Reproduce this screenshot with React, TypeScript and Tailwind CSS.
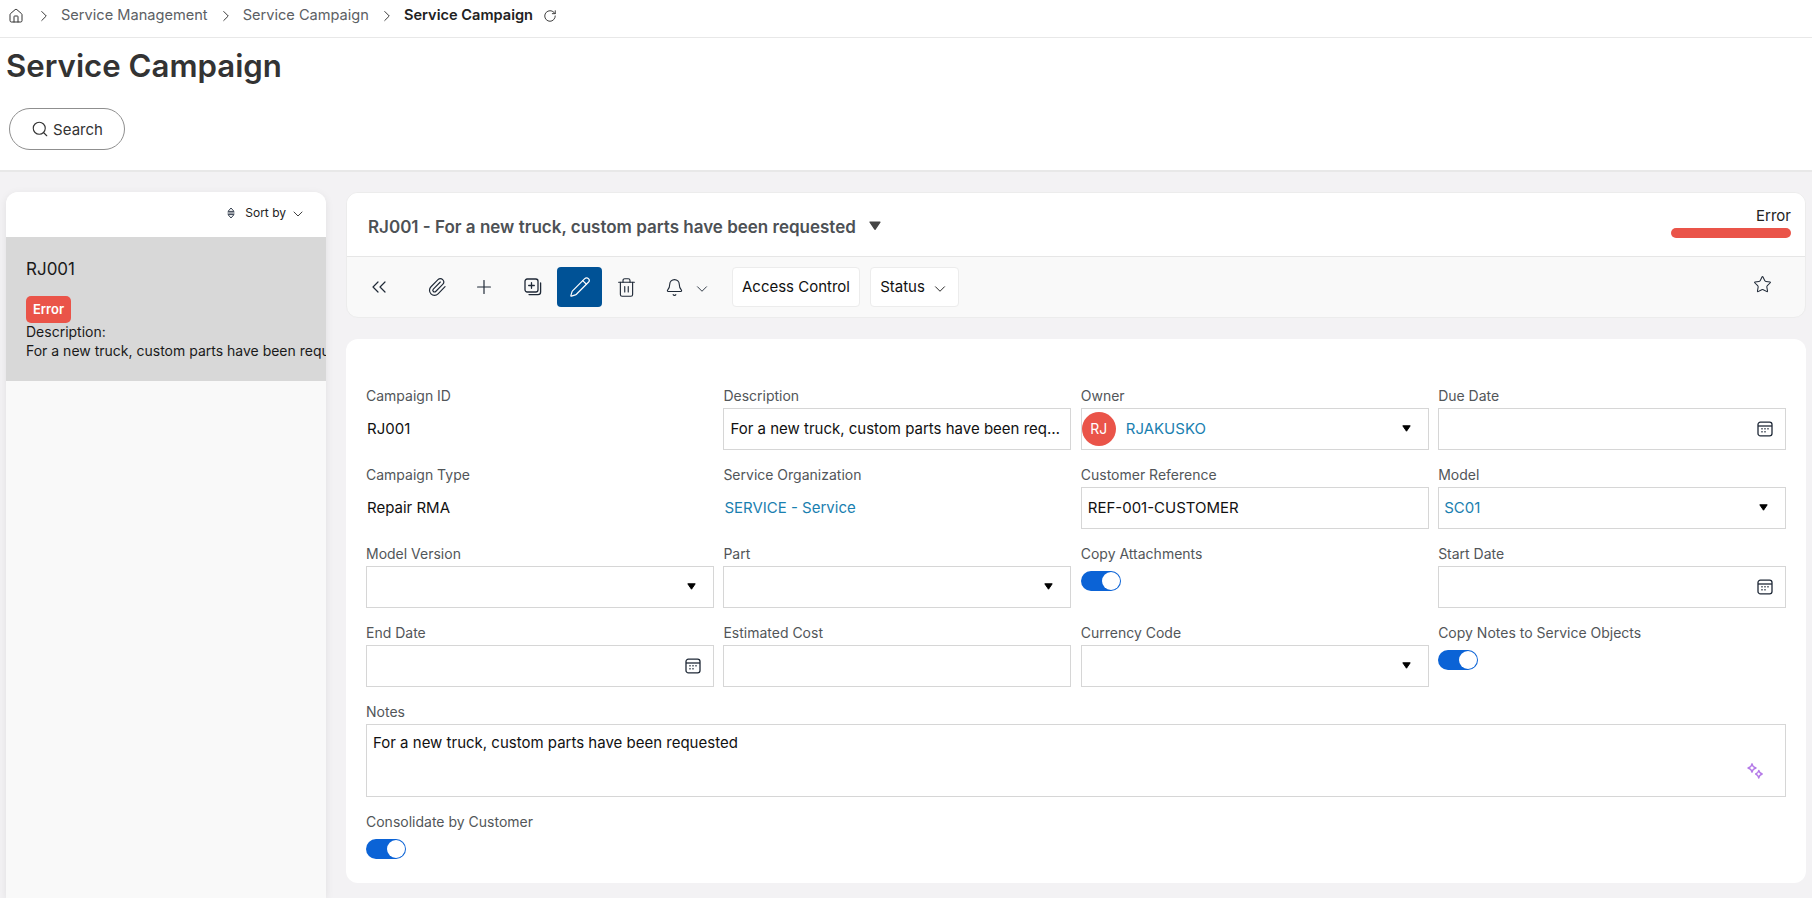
import React from 'react';
import { Bell, ChevronDown, ChevronRight, ChevronsLeft, House, Paperclip, Pencil, Plus, RotateCw, Search, Star, Trash2 } from 'lucide-react';

const Caret = ({ className = '', size = 9 }: { className?: string; size?: number }) => (
  <svg width={size} height={size * 0.78} viewBox="0 0 9 7" className={className}>
    <path d="M0.8 0.8 H8.2 L4.5 6.2 Z" fill="currentColor" stroke="currentColor" strokeLinejoin="round" />
  </svg>
);

const CalendarIcon = () => (
  <svg width="16" height="16" viewBox="0 0 16 16" fill="none" stroke="#1f2937" strokeWidth="1.3">
    <rect x="1" y="1.2" width="14" height="13.6" rx="2.4" />
    <path d="M1 5 H15" />
    <path d="M4.4 7.8h1.2M7.4 7.8h1.2M10.4 7.8h1.2M4.4 10.8h1.2M7.4 10.8h1.2" strokeWidth="1.4" />
  </svg>
);

const SparkleIcon = () => (
  <svg width="16" height="16" viewBox="0 0 16 16" fill="none" stroke="#b57be8" strokeWidth="1.4" strokeLinejoin="round">
    <path d="M5 0.8 Q5.6 4.2 9 5 Q5.6 5.8 5 9.2 Q4.4 5.8 1 5 Q4.4 4.2 5 0.8 Z" />
    <path d="M11.8 7.4 Q12.2 10 15.2 11 Q12.2 12 11.8 15 Q11.2 12 8.6 11 Q11.2 10 11.8 7.4 Z" />
  </svg>
);

const SortIcon = () => (
  <svg width="8" height="12" viewBox="0 0 8 12" fill="none" stroke="#374151" strokeWidth="1">
    <path d="M1 4.4 L4 1 L7 4.4 Z" />
    <path d="M0.5 6 H7.5" />
    <path d="M1 7.6 L4 11 L7 7.6 Z" />
  </svg>
);

const DuplicateIcon = () => (
  <svg width="18" height="18" viewBox="0 0 18 18" fill="none" stroke="#1f2937" strokeWidth="1.3" strokeLinecap="round">
    <rect x="1" y="1" width="13" height="13" rx="2.2" />
    <path d="M7.5 4.7 V10.3 M4.7 7.5 H10.3" />
    <path d="M16.6 5 V14 Q16.6 16.6 14 16.6 H5" />
  </svg>
);

const Toggle = () => (
  <div className="mt-[5px] flex h-5 w-10 items-center justify-end rounded-full bg-[#0b63d6] p-px">
    <div className="size-[18px] rounded-full bg-white" />
  </div>
);

const Field = ({ label, children }: { label: string; children: React.ReactNode }) => (
  <div className="min-w-0">
    <div className="h-[23px] text-sm leading-[21px] text-[#525659]">{label}</div>
    {children}
  </div>
);

const Box = ({ children, className = '' }: { children?: React.ReactNode; className?: string }) => (
  <div className={`flex h-[42px] items-center border border-[#d6d6d6] bg-white text-[15px] text-[#111] ${className}`}>
    {children}
  </div>
);

const SelectBox = ({ children }: { children?: React.ReactNode }) => (
  <Box className="pr-[17px]">
    <div className="min-w-0 flex-1">{children}</div>
    <Caret className="text-black" />
  </Box>
);

const DateBox = () => (
  <Box className="justify-end pr-[12px]">
    <CalendarIcon />
  </Box>
);

const Plain = ({ children, link }: { children: React.ReactNode; link?: boolean }) => (
  <div className={`flex h-[42px] items-center pl-px text-[15px] ${link ? 'text-[#1a80b0]' : 'text-[#111]'}`}>{children}</div>
);

export default function App() {
  return (
    <div className="flex h-[898px] flex-col overflow-hidden bg-[#f3f2f4] font-['Inter',sans-serif]">
      <header className="border-b-2 border-[#e8e8e8] bg-white">
        <nav className="flex h-[38px] items-center border-b border-[#e8e8e8] pb-[6px] pl-[8px] text-[14.6px] text-[#5c6064]">
          <House size={16} strokeWidth={1.5} className="text-[#333]" />
          <ChevronRight size={18} strokeWidth={1.3} className="ml-[11px] text-[#333]" />
          <span className="ml-[8px]">Service Management</span>
          <ChevronRight size={18} strokeWidth={1.3} className="ml-[9px] text-[#333]" />
          <span className="ml-[8px]">Service Campaign</span>
          <ChevronRight size={18} strokeWidth={1.3} className="ml-[9px] text-[#333]" />
          <span className="ml-[8px] font-semibold text-[#222]">Service Campaign</span>
          <RotateCw size={14} strokeWidth={1.6} className="ml-[10px] text-[#333]" />
        </nav>
        <h1 className="mt-[7px] pl-[6px] text-[31.2px] leading-[42px] font-semibold text-[#333]">Service Campaign</h1>
        <div className="mt-[21px] mb-[20px] pl-[9px]">
          <button className="flex h-[42px] w-[116px] items-center justify-center gap-[4px] rounded-[21px] border border-[#8f8f8f] bg-white pt-[2px] text-[15px] text-[#333]">
            <Search size={18} strokeWidth={1.5} className="-mt-[2px]" />
            Search
          </button>
        </div>
      </header>

      <div className="flex min-h-0 flex-1 gap-[20px] pt-5 pr-[6px] pl-[6px]">
        <aside className="flex w-[320px] shrink-0 flex-col overflow-hidden rounded-t-xl bg-[#f9f9f9] shadow-[0_2px_8px_rgba(0,0,0,0.08)]">
          <div className="flex h-[45px] shrink-0 items-center justify-end bg-white pr-[20px] pb-[3px] text-xs text-[#222]">
            <SortIcon />
            <span className="ml-[10px]">Sort by</span>
            <ChevronDown size={16} strokeWidth={1.3} className="mt-[2px] ml-[4px]" />
          </div>
          <div className="h-[144px] shrink-0 overflow-hidden bg-[#d8d8d8] pt-[19px] pl-5 text-sm whitespace-nowrap text-[#1a1a1a]">
            <div className="text-[17px] leading-[26px]">RJ001</div>
            <div className="mt-[14px] flex h-[27px] w-[45px] items-center justify-center rounded-[5px] bg-[#ea5449] text-[13px] font-semibold text-white">Error</div>
            <div className="-mt-px leading-[19px]">Description:</div>
            <div className="leading-[19px]">For a new truck, custom parts have been requested</div>
          </div>
        </aside>

        <main className="flex min-w-0 flex-1 flex-col gap-[21px]">
          <section className="shrink-0 overflow-hidden rounded-xl border border-[#ececec] bg-[#f9f9f9]">
            <div className="flex h-[64px] items-center justify-between border-b border-[#e6e6e6] bg-white pr-[14px] pl-[21px]">
              <div className="flex items-center gap-[13px] pt-[6px] text-[17px] font-semibold text-[#4d5155]">
                RJ001 - For a new truck, custom parts have been requested
                <Caret size={12} className="mb-[4px] text-[#444]" />
              </div>
              <div className="flex w-[120px] flex-col items-end pb-[7px]">
                <span className="text-[15px] leading-[22px] text-[#222]">Error</span>
                <div className="mt-[1px] h-[10px] w-full rounded-full bg-[#ea5449]" />
              </div>
            </div>
            <div className="flex h-[60px] items-center pr-[33px] pl-[20px] text-[#1f2937]">
              <ChevronsLeft size={24} strokeWidth={1.2} />
              <Paperclip size={20} strokeWidth={1.4} className="ml-[36px]" />
              <Plus size={22} strokeWidth={1.3} className="ml-[26px]" />
              <div className="ml-[29px]"><DuplicateIcon /></div>
              <button className="ml-[15px] flex h-10 w-[45px] items-center justify-center rounded-[4px] bg-[#005296] text-white">
                <Pencil size={22} strokeWidth={1.3} />
              </button>
              <Trash2 size={21} strokeWidth={1.3} className="ml-[14px]" />
              <Bell size={19} strokeWidth={1.4} className="ml-[28px]" />
              <ChevronDown size={18} strokeWidth={1.2} className="mt-[3px] ml-[9px]" />
              <div className="ml-[21px] flex h-10 w-[128px] items-center justify-center rounded-[4px] border border-[#ececec] bg-white text-[15px] text-[#111]">Access Control</div>
              <div className="ml-[10px] flex h-10 w-[89px] items-center justify-center gap-[6px] rounded-[4px] border border-[#ececec] bg-white text-[15px] text-[#111]">
                Status
                <ChevronDown size={18} strokeWidth={1.2} className="mt-[3px]" />
              </div>
              <Star size={19} strokeWidth={1.3} className="mb-[6px] ml-auto" />
            </div>
          </section>

          <section className="h-[544px] shrink-0 rounded-xl bg-white pt-[46px] pr-5 pl-[20px]">
            <div className="grid grid-cols-4 gap-x-[9.5px] gap-y-[14px]">
              <Field label="Campaign ID"><Plain>RJ001</Plain></Field>
              <Field label="Description">
                <Box className="px-[6px]"><span className="truncate">For a new truck, custom parts have been requested</span></Box>
              </Field>
              <Field label="Owner">
                <SelectBox>
                  <div className="flex items-center gap-[10px]">
                    <div className="flex size-[34px] items-center justify-center rounded-full bg-[#ea5449] text-sm text-white">RJ</div>
                    <span className="text-[#1a80b0]">RJAKUSKO</span>
                  </div>
                </SelectBox>
              </Field>
              <Field label="Due Date"><DateBox /></Field>

              <Field label="Campaign Type"><Plain>Repair RMA</Plain></Field>
              <Field label="Service Organization"><Plain link>SERVICE - Service</Plain></Field>
              <Field label="Customer Reference"><Box className="px-[6px]">REF-001-CUSTOMER</Box></Field>
              <Field label="Model">
                <SelectBox><span className="pl-[5px] text-[#1a80b0]">SC01</span></SelectBox>
              </Field>

              <Field label="Model Version"><SelectBox /></Field>
              <Field label="Part"><SelectBox /></Field>
              <Field label="Copy Attachments"><Toggle /></Field>
              <Field label="Start Date"><DateBox /></Field>

              <Field label="End Date"><DateBox /></Field>
              <Field label="Estimated Cost"><Box /></Field>
              <Field label="Currency Code"><SelectBox /></Field>
              <Field label="Copy Notes to Service Objects"><Toggle /></Field>

              <div className="col-span-4">
                <Field label="Notes">
                  <div className="flex h-[73px] justify-between border border-[#d6d6d6] pt-[7px] pr-[22px] pb-[17px] pl-[6px] text-[15px] text-[#111]">
                    <span>For a new truck, custom parts have been requested</span>
                    <div className="self-end"><SparkleIcon /></div>
                  </div>
                </Field>
              </div>
              <div className="col-span-4">
                <Field label="Consolidate by Customer"><Toggle /></Field>
              </div>
            </div>
          </section>
        </main>
      </div>
    </div>
  );
}
